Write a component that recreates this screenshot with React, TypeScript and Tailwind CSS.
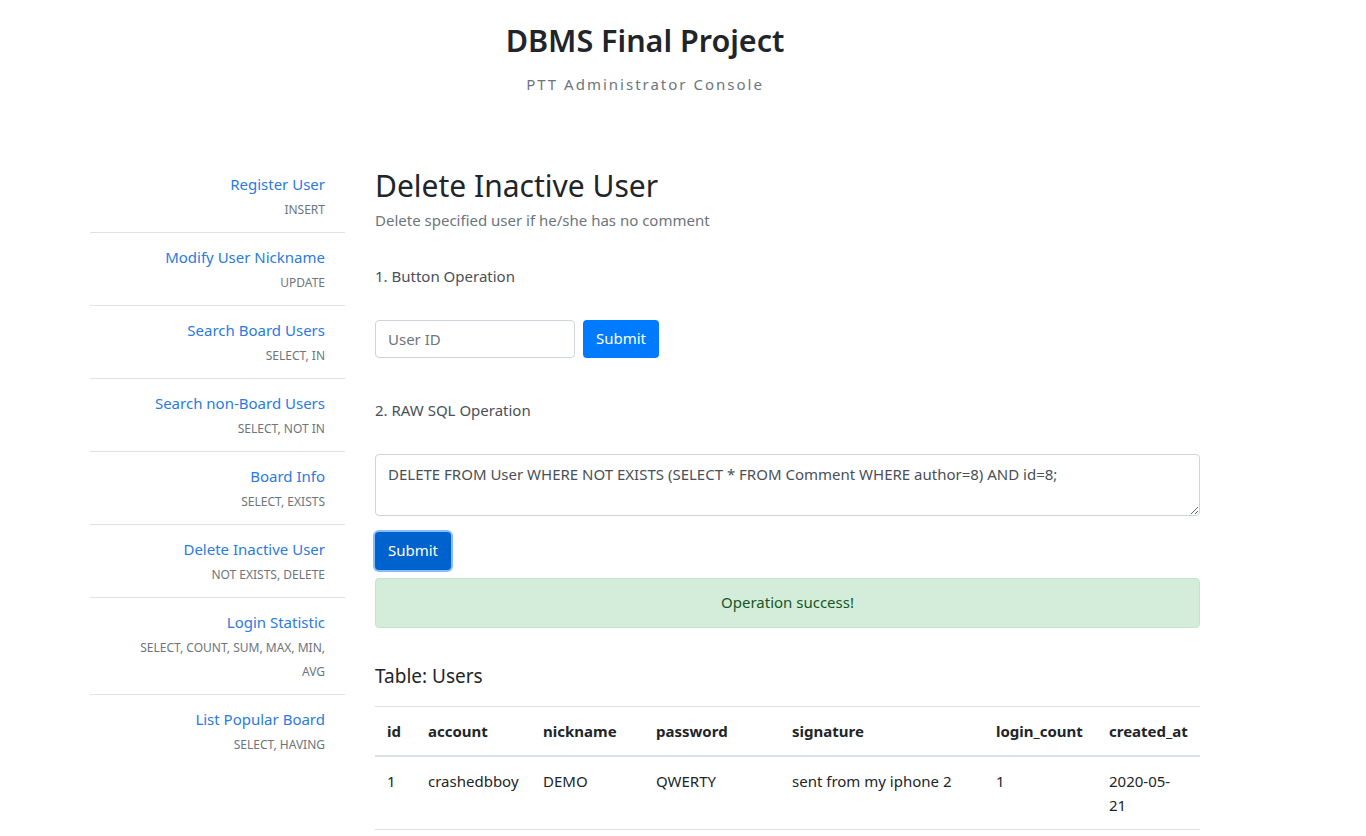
import React from "react";

const menu = [
  { title: "Register User", sub: "INSERT" },
  { title: "Modify User Nickname", sub: "UPDATE" },
  { title: "Search Board Users", sub: "SELECT, IN" },
  { title: "Search non-Board Users", sub: "SELECT, NOT IN" },
  { title: "Board Info", sub: "SELECT, EXISTS" },
  { title: "Delete Inactive User", sub: "NOT EXISTS, DELETE" },
  { title: "Login Statistic", sub: "SELECT, COUNT, SUM, MAX, MIN, AVG" },
  { title: "List Popular Board", sub: "SELECT, HAVING" },
];

const cols = [
  { name: "id", w: "w-[41px]" },
  { name: "account", w: "w-[115px]" },
  { name: "nickname", w: "w-[113px]" },
  { name: "password", w: "w-[136px]" },
  { name: "signature", w: "w-[204px]" },
  { name: "login_count", w: "w-[113px]" },
  { name: "created_at", w: "w-[103px]" },
];

export default function App() {
  return (
    <div className="min-h-screen bg-white text-[#212529] font-['Noto_Sans',sans-serif]">
      <div className="ml-[75px] w-[1140px] px-[15px]">
        <header className="flex flex-col items-center pt-[18px]">
          <h1 className="text-[30.5px] font-semibold leading-[44px] text-[#212529]">DBMS Final Project</h1>
          <p className="mt-[11px] text-[15px] tracking-[2px] text-[#6c757d]">PTT Administrator Console</p>
        </header>

        <div className="mt-[62px] flex gap-[30px]">
          <nav className="mt-[2px] w-[255px] shrink-0">
            {menu.map((m, i) => (
              <div
                key={m.title}
                className={`pt-3 pb-[10px] pr-5 pl-10 text-right ${i < menu.length - 1 ? "border-b border-[#dee2e6]" : ""}`}
              >
                <a className="block text-[15px] leading-6 text-[#2a7ae2] cursor-pointer">{m.title}</a>
                <div className="mt-[2px] text-[12px] leading-6 text-[#6c757d]">{m.sub}</div>
              </div>
            ))}
          </nav>

          <main className="w-[825px] pt-[8px]">
            <h2 className="text-[30px] leading-[40px] font-normal text-[#212529]">Delete Inactive User</h2>
            <p className="mt-[2px] text-[15px] leading-6 text-[#6c757d]">Delete specified user if he/she has no comment</p>

            <p className="mt-[32px] text-[15px] leading-6 text-[#495057]">1. Button Operation</p>
            <div className="mt-[32px] flex gap-2">
              <input
                placeholder="User ID"
                className="h-[38px] w-[200px] rounded border border-[#ced4da] px-3 text-[15px] text-[#495057] placeholder:text-[#6c757d] outline-none"
              />
              <button className="h-[38px] w-[76px] rounded bg-[#007bff] text-[15px] text-white">Submit</button>
            </div>

            <p className="mt-[40px] text-[15px] leading-6 text-[#495057]">2. RAW SQL Operation</p>
            <textarea
              className="mt-[32px] block h-[62px] w-full rounded border border-[#ced4da] px-3 py-[7px] text-[15px] leading-6 text-[#495057] outline-none"
              defaultValue="DELETE FROM User WHERE NOT EXISTS (SELECT * FROM Comment WHERE author=8) AND id=8;"
            />
            <button className="mt-[16px] block h-[38px] w-[76px] rounded bg-[#0062cc] text-[15px] text-white ring-[2px] ring-[#86bdfa]">
              Submit
            </button>
            <div className="mt-[8px] flex h-[50px] items-center justify-center rounded border border-[#c3e6cb] bg-[#d4edda] text-[15px] text-[#155724]">
              Operation success!
            </div>

            <h3 className="mt-[36px] text-[19px] leading-6 text-[#212529]">Table: Users</h3>
            <table className="mt-[18px] w-full table-fixed border-collapse text-[15px] text-[#212529]">
              <thead>
                <tr className="border-t border-[#dee2e6]">
                  {cols.map((c) => (
                    <th key={c.name} className={`${c.w} border-b-2 border-[#dee2e6] p-3 text-left font-bold leading-6`}>
                      {c.name}
                    </th>
                  ))}
                </tr>
              </thead>
              <tbody>
                <tr className="border-b border-[#dee2e6] align-top">
                  <td className="p-3 leading-6">1</td>
                  <td className="p-3 leading-6">crashedbboy</td>
                  <td className="p-3 leading-6">DEMO</td>
                  <td className="p-3 leading-6">QWERTY</td>
                  <td className="p-3 leading-6">sent from my iphone 2</td>
                  <td className="p-3 leading-6">1</td>
                  <td className="p-3 leading-6">
                    2020-05-
                    <br />
                    21
                  </td>
                </tr>
              </tbody>
            </table>
          </main>
        </div>
      </div>
    </div>
  );
}
